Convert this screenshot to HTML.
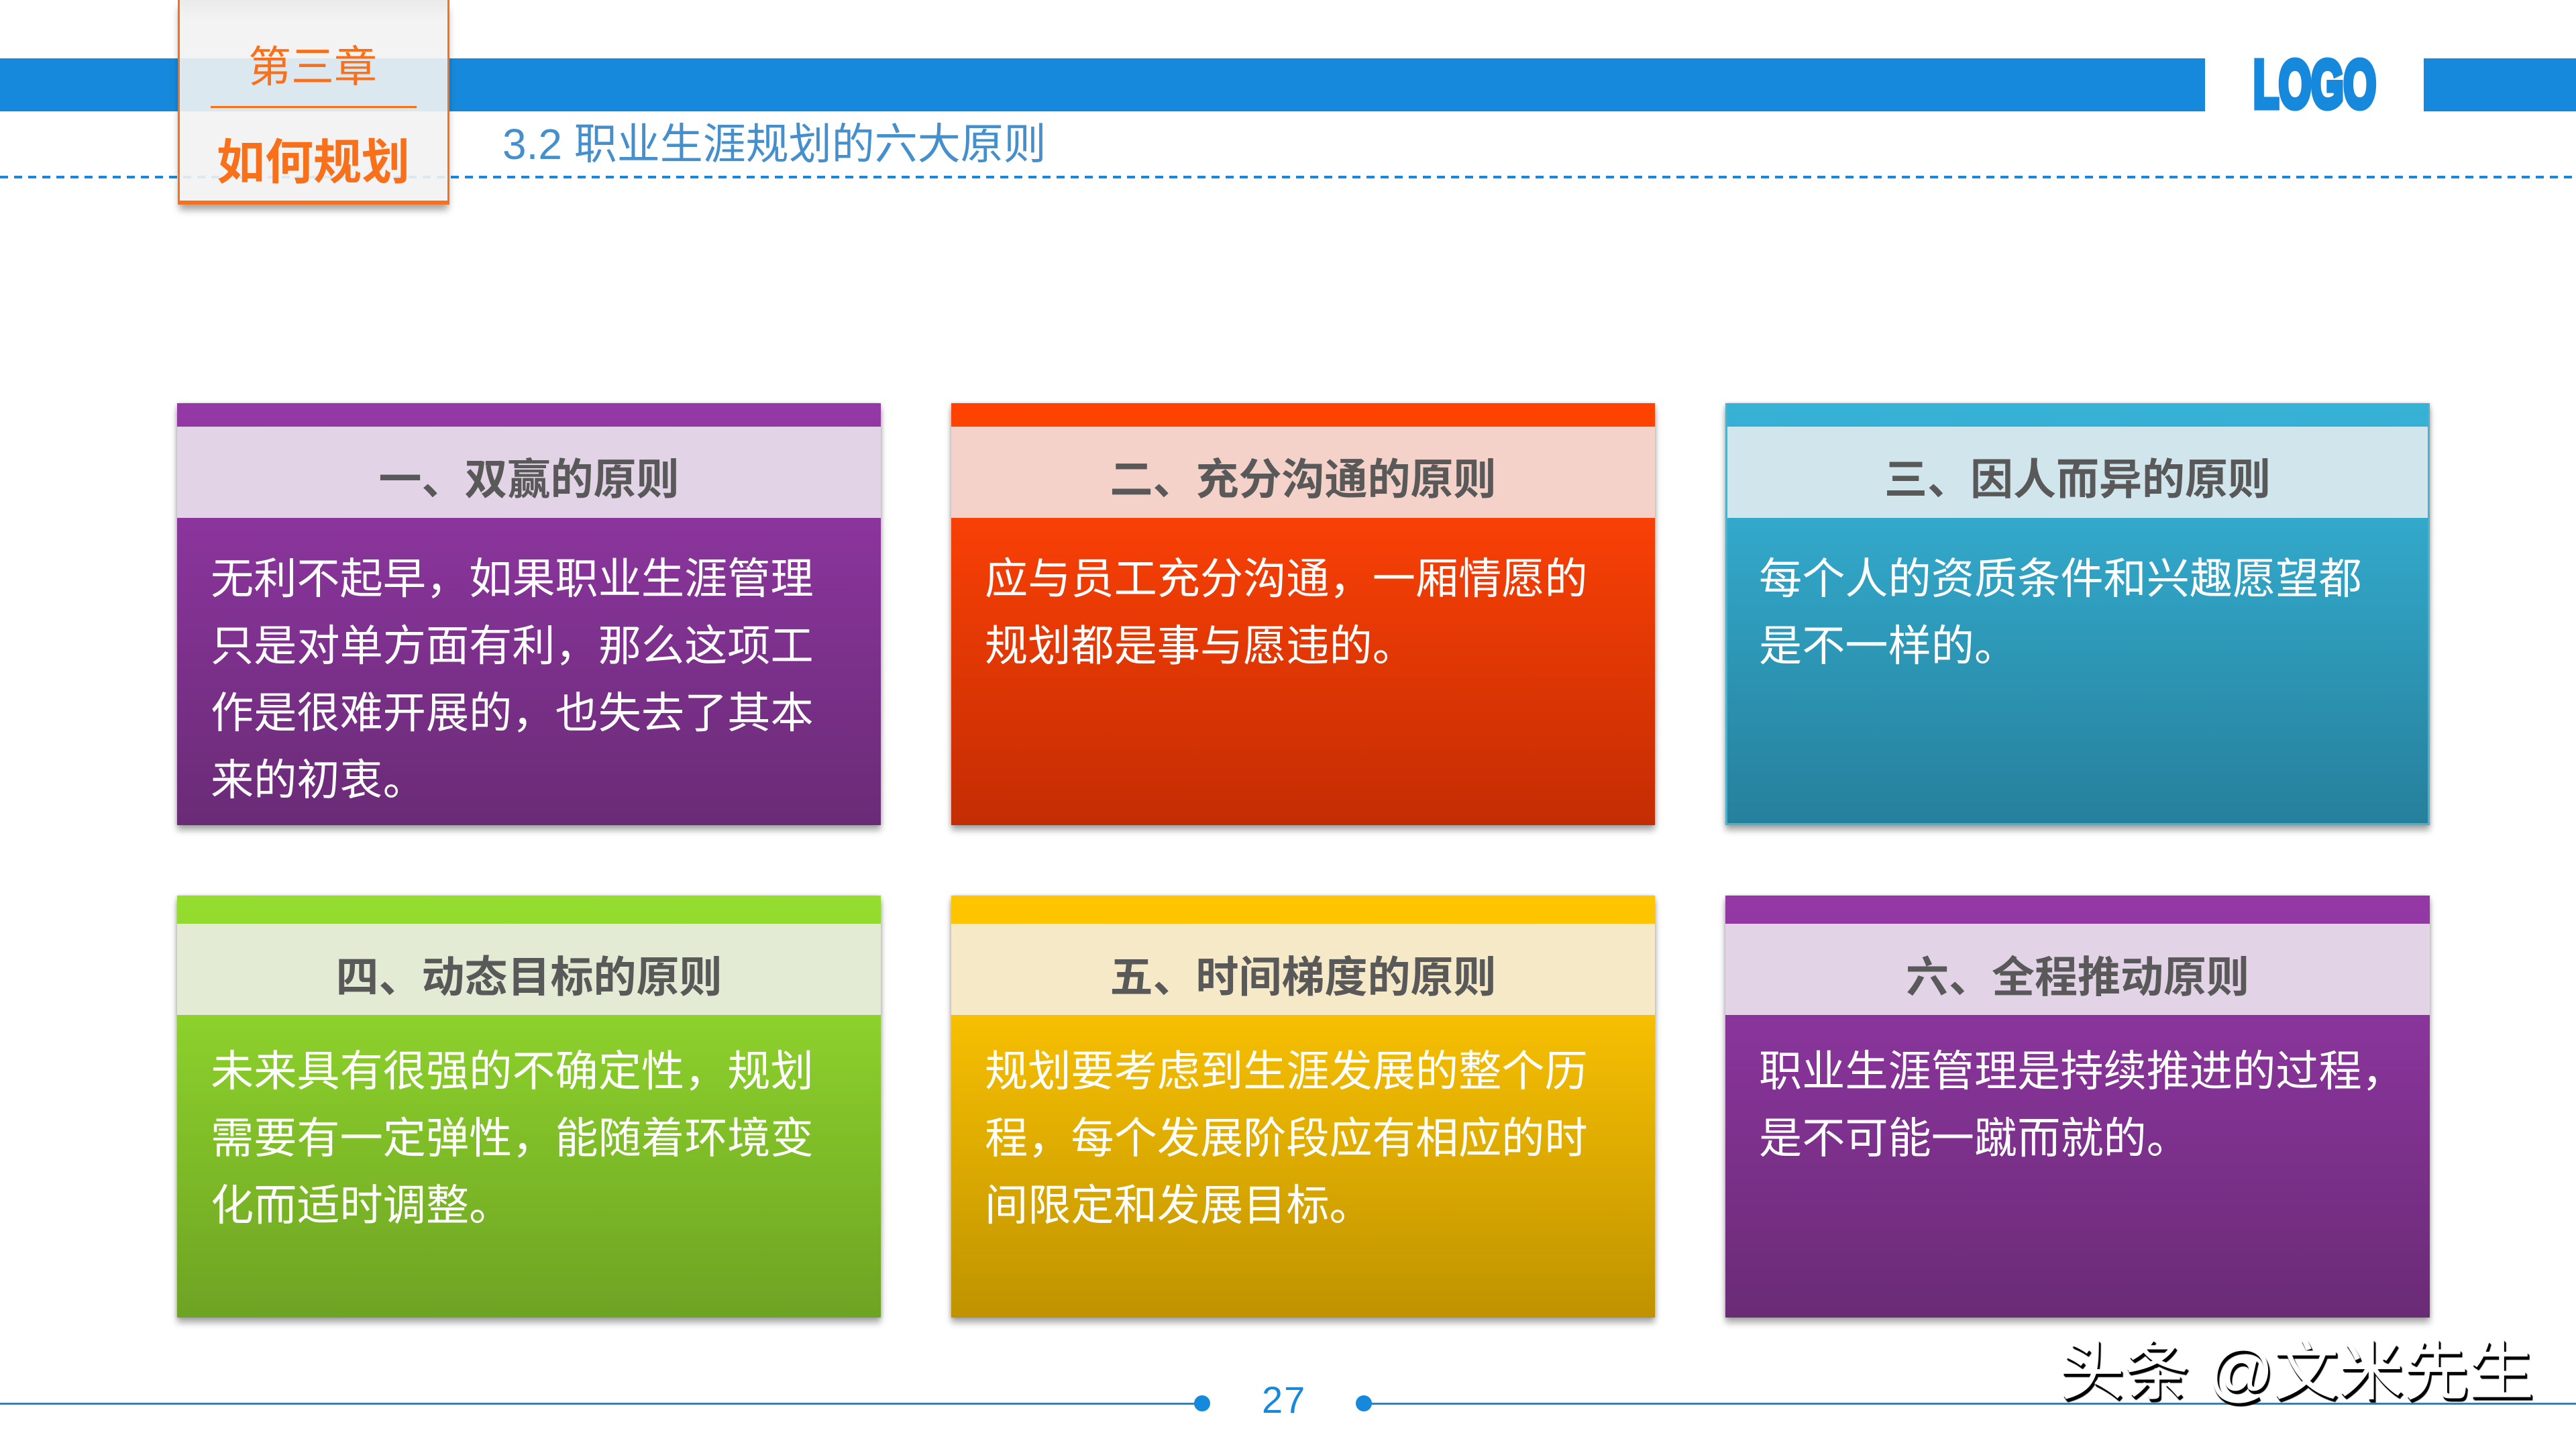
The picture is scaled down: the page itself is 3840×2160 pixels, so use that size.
<!DOCTYPE html>
<html lang="zh-CN">
<head>
<meta charset="utf-8">
<title>3.2 职业生涯规划的六大原则</title>
<style>
html,body{margin:0;padding:0;background:#fff}
#s{position:relative;width:3840px;height:2160px;overflow:hidden;background:#fff;font-family:"Liberation Sans","Noto Sans CJK SC",sans-serif}
#s div{position:absolute;box-sizing:border-box}
.bar{background:#1789dc;top:87px;height:79px}
.dash{left:0;width:3840px;top:262px;height:4px;background:repeating-linear-gradient(90deg,#1789dc 0 12px,transparent 12px 21px)}
.tab{left:265px;top:0;width:405px;height:305px;background:linear-gradient(180deg,rgba(232,232,232,.9) 0,rgba(242,242,242,.9) 30px,rgba(242,242,242,.9) 100%);border-left:3px solid #f8701a;border-right:3px solid #f8701a;border-bottom:6px solid #f8701a;box-shadow:0 10px 10px -2px rgba(0,0,0,.35)}
.tline{left:314px;top:158px;width:307px;height:3px;background:#f8701a}
.t{white-space:pre;text-align:center}
.card{width:1049px;box-shadow:0 8px 9px rgba(0,0,0,.32),-2px 0 5px rgba(0,0,0,.1),2px 0 5px rgba(0,0,0,.1)}
.hd{left:0;width:100%;text-align:center;color:#595959;font-weight:700;font-size:64px;white-space:pre}
.bd{left:50px;color:#fff;font-size:64.2px;line-height:100px;white-space:pre}
.r1{top:601px;height:629px}
.r2{top:1335px;height:629px}
.r1 .hd{top:35px;height:136px;line-height:159px}
.r2 .hd{top:42px;height:136px;line-height:160px}
.r1 .bd{top:212px}
.r2 .bd{top:211.5px}
.c1{left:264px}.c2{left:1418px}.c3{left:2572px;width:1050px}
.dot{width:24px;height:24px;border-radius:50%;background:#1789dc;top:2080px}
.fl{background:#1789dc;top:2091px;height:3px}
</style>
</head>
<body>
<div id="s">
  <div class="bar" style="left:0;width:3287px"></div>
  <div class="bar" style="left:3613px;width:227px"></div>
  <div class="dash"></div>

  <div class="t" style="left:3360px;top:80px;width:185px;height:92px;overflow:visible">
    <svg width="185" height="92" style="display:block;overflow:visible"><text x="-1" y="44" font-family="Liberation Sans" font-weight="700" font-size="100" fill="#1789dc" stroke="#1789dc" stroke-width="9" textLength="183" lengthAdjust="spacingAndGlyphs">LOGO</text></svg>
  </div>

  <div class="tab"></div>
  <div class="tline"></div>
  <div class="t" style="left:266px;top:53px;width:400px;font-size:64px;line-height:94px;color:#f8701a">第三章</div>
  <div class="t" style="left:266px;top:193px;width:402px;font-size:72px;line-height:100px;font-weight:700;color:#f8701a">如何规划</div>
  <div class="t" style="left:749px;top:168px;font-size:64px;line-height:94px;color:#448fcc">3.2 职业生涯规划的六大原则</div>

  <!-- row 1 -->
  <div class="card r1 c1" style="background:linear-gradient(180deg,#9438a6 0,#8b359d 27%,#6a2b76 100%)">
    <div style="left:0;top:35px;width:100%;height:136px;background:#e2d3e6"></div>
    <div class="hd">一、双赢的原则</div>
    <div class="bd">无利不起早，如果职业生涯管理
只是对单方面有利，那么这项工
作是很难开展的，也失去了其本
来的初衷。</div>
  </div>
  <div class="card r1 c2" style="background:linear-gradient(180deg,#ff4201 0,#f94006 27%,#c42d03 100%)">
    <div style="left:0;top:35px;width:100%;height:136px;background:#f4d2c9"></div>
    <div class="hd">二、充分沟通的原则</div>
    <div class="bd">应与员工充分沟通，一厢情愿的
规划都是事与愿违的。</div>
  </div>
  <div class="card r1 c3" style="background:linear-gradient(180deg,#36b2d6 0,#33a9cb 27%,#26809c 100%);border:3px solid #4fb0cc;border-top:0">
    <div style="left:0;top:35px;width:100%;height:136px;background:#d1e5ec"></div>
    <div class="hd">三、因人而异的原则</div>
    <div class="bd" style="left:47px">每个人的资质条件和兴趣愿望都
是不一样的。</div>
  </div>

  <!-- row 2 -->
  <div class="card r2 c1" style="background:linear-gradient(180deg,#95dd2f 0,#8dd22c 27%,#6ea323 100%)">
    <div style="left:0;top:42px;width:100%;height:136px;background:#e3ebd4"></div>
    <div class="hd">四、动态目标的原则</div>
    <div class="bd">未来具有很强的不确定性，规划
需要有一定弹性，能随着环境变
化而适时调整。</div>
  </div>
  <div class="card r2 c2" style="background:linear-gradient(180deg,#ffc500 0,#f8c002 27%,#bf9300 100%)">
    <div style="left:0;top:42px;width:100%;height:136px;background:#f5e9c7"></div>
    <div class="hd">五、时间梯度的原则</div>
    <div class="bd">规划要考虑到生涯发展的整个历
程，每个发展阶段应有相应的时
间限定和发展目标。</div>
  </div>
  <div class="card r2 c3" style="background:linear-gradient(180deg,#9438a6 0,#8b359d 27%,#6a2b76 100%)">
    <div style="left:0;top:42px;width:100%;height:136px;background:#e2d3e6"></div>
    <div class="hd">六、全程推动原则</div>
    <div class="bd">职业生涯管理是持续推进的过程，
是不可能一蹴而就的。</div>
  </div>

  <!-- footer -->
  <div class="fl" style="left:0;width:1791px"></div>
  <div class="fl" style="left:2033px;width:1807px"></div>
  <div class="dot" style="left:1780px"></div>
  <div class="dot" style="left:2021px"></div>
  <div class="t" style="left:1881px;top:2052px;font-size:56px;line-height:70px;color:#1789dc;letter-spacing:2px">27</div>
  <div class="t" style="left:3070px;top:1990px;font-size:97px;line-height:110px;color:#fff;text-shadow:3px 5px 1px #000,2px 4px 1px #000,1px 3px 1px #000">头条 @文米先生</div>
</div>
</body>
</html>
